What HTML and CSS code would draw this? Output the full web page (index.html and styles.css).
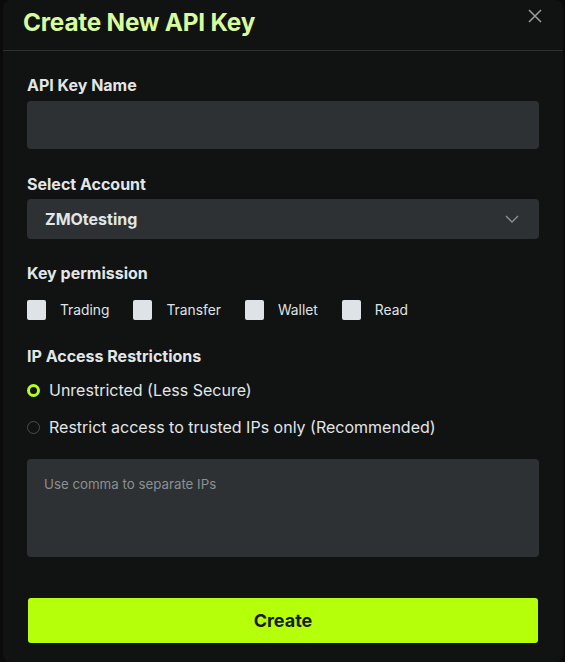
FILE: index.html
```html
<!DOCTYPE html>
<html lang="en">
<head>
  <meta charset="UTF-8" />
  <meta name="viewport" content="width=device-width, initial-scale=1.0" />
  <title>Create New API Key</title>
  <link rel="stylesheet" href="styles.css">
</head>
<body>

  <div class="modal">
    <div class="modal-header">
      <h1>Create New API Key</h1>
      <button class="btn-close" type="button" aria-label="Close">
        <svg width="14" height="14" viewBox="0 0 14 14"><path d="M1 1L13 13M13 1L1 13" stroke="#9a9fa1" stroke-width="1.5" fill="none"/></svg>
      </button>
    </div>

    <form class="modal-body">
      <label class="field-label label-name" for="keyName">API Key Name</label>
      <input class="text-input" type="text" id="keyName" />

      <label class="field-label label-account">Select Account</label>
      <div class="select-box">
        <span>ZMOtesting</span>
        <svg width="14" height="8" viewBox="0 0 14 8"><path d="M1 1L7 7L13 1" stroke="#8d9294" stroke-width="1.3" fill="none"/></svg>
      </div>

      <div class="field-label label-perm">Key permission</div>
      <div class="perm-row">
        <label class="check"><span class="box"></span>Trading</label>
        <label class="check"><span class="box"></span>Transfer</label>
        <label class="check"><span class="box"></span>Wallet</label>
        <label class="check"><span class="box"></span>Read</label>
      </div>

      <div class="field-label label-ip">IP Access Restrictions</div>
      <label class="radio"><span class="dot active"></span>Unrestricted (Less Secure)</label>
      <label class="radio radio-second"><span class="dot"></span>Restrict access to trusted IPs only (Recommended)</label>

      <textarea class="ip-list" placeholder="Use comma to separate IPs"></textarea>

      <button class="btn-create" type="submit">Create</button>
    </form>
  </div>

</body>
</html>
```

FILE: styles.css
```css
/* Fundo da página */
body {
  margin: 0;
  background: #0b0b0b;
  font-family: Inter, "Noto Sans", sans-serif;
  overflow: hidden;
}

/* Janela do modal */
.modal {
  margin-left: 3px;
  width: 560px;
  height: 662px;
  background: #111212;
  border-radius: 8px;
  box-sizing: border-box;
}

.modal-header {
  height: 51px;
  border-bottom: 1px solid #2d2f30;
  box-sizing: border-box;
  display: flex;
  justify-content: space-between;
  align-items: flex-start;
  padding: 0 21px 0 20px;
}

.modal-header h1 {
  margin: 7px 0 0;
  font-size: 24.3px;
  line-height: 30px;
  font-weight: 700;
  color: #d7fc9d;
  letter-spacing: -0.2px;
}

.btn-close {
  background: none;
  border: none;
  padding: 0;
  margin-top: 9px;
  cursor: pointer;
}

/* Corpo do formulário */
.modal-body {
  display: flex;
  flex-direction: column;
  padding: 24px 24px 0 24px;
}

.field-label {
  display: block;
  font-size: 16px;
  line-height: 20px;
  font-weight: 700;
  color: #e1e6e7;
}

.label-name { margin-bottom: 6px; }
.label-account { margin-top: 25px; margin-bottom: 5px; }
.label-perm { margin-top: 24px; margin-bottom: 17px; }
.label-ip { margin-top: 26px; margin-bottom: 13px; }

.text-input {
  height: 48px;
  background: #2d3133;
  border: none;
  border-radius: 4px;
  outline: none;
  color: #e1e6e7;
  padding: 0 18px;
  font-size: 16px;
}

.select-box {
  height: 40px;
  background: #2d3133;
  border-radius: 4px;
  display: flex;
  align-items: center;
  justify-content: space-between;
  padding: 0 20px 0 18px;
  font-size: 16px;
  font-weight: 700;
  color: #e1e6e7;
}

/* Permissões */
.perm-row {
  display: flex;
  align-items: center;
  height: 20px;
}

.check {
  display: flex;
  align-items: center;
  font-size: 13.8px;
  color: #dfe4e5;
  margin-right: 24px;
}

.check .box {
  width: 19px;
  height: 20px;
  background: #dde3e6;
  border-radius: 2px;
  margin-right: 14px;
}

/* Restrição de IP */
.radio {
  display: flex;
  align-items: center;
  font-size: 16px;
  line-height: 22px;
  color: #e1e6e7;
}

.radio-second { margin-top: 15px; }

.dot {
  width: 13px;
  height: 13px;
  border-radius: 50%;
  border: 1px solid #4a4d4f;
  box-sizing: border-box;
  margin-right: 9px;
}

.dot.active {
  border: 3.5px solid #b6ff1a;
  background: #111212;
}

.ip-list {
  margin-top: 21px;
  height: 98px;
  background: #2d3133;
  border: none;
  border-radius: 4px;
  resize: none;
  outline: none;
  padding: 17px 17px;
  box-sizing: border-box;
  font-family: inherit;
  font-size: 13.3px;
  color: #e1e6e7;
}

.ip-list::placeholder {
  color: #8b9092;
}

.btn-create {
  margin: 41px 1px 0 1px;
  height: 45px;
  background: #b6ff0a;
  border: none;
  border-radius: 3px;
  font-family: inherit;
  font-size: 18px;
  font-weight: 700;
  color: #1a1c1c;
  cursor: pointer;
}
```
